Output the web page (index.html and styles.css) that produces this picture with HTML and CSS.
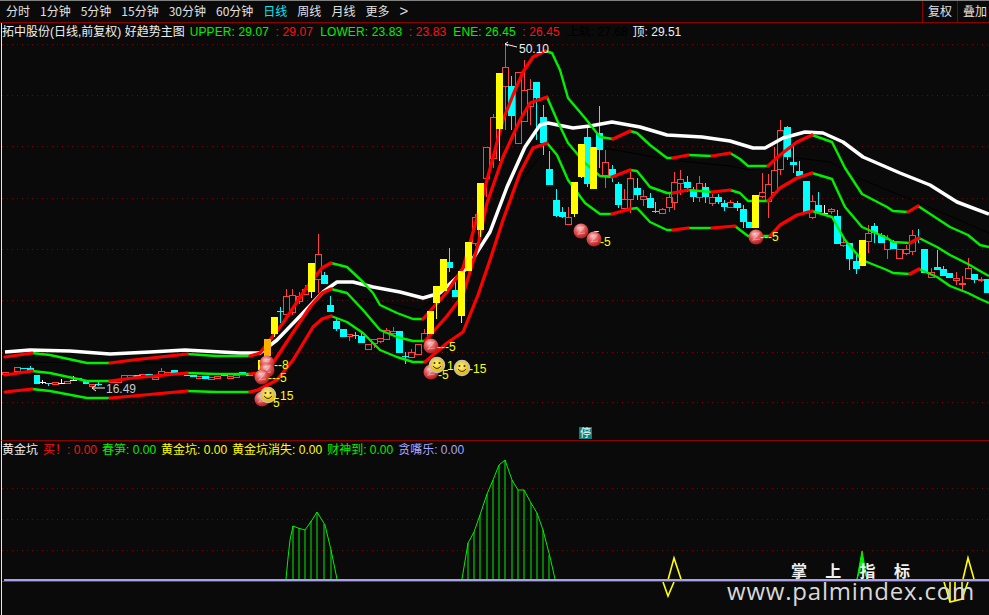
FILE: index.html
```html
<!DOCTYPE html>
<html lang="zh-CN">
<head>
<meta charset="utf-8">
<title>拓中股份</title>
<link rel="stylesheet" href="styles.css">
</head>
<body>
<header class="toolbar">
  <nav class="periods">
    <span>分时</span><span>1分钟</span><span>5分钟</span><span>15分钟</span><span>30分钟</span><span>60分钟</span><span class="on">日线</span><span>周线</span><span>月线</span><span>更多</span><span class="more">&gt;</span>
  </nav>
  <div class="tools"><span>复权</span><span>叠加</span></div>
</header>
<section class="panel main">
  <div class="legend">
    <span class="w title">拓中股份(日线,前复权) 好趋势主图</span>
    <span class="g">UPPER: 29.07 <i class="r">: 29.07</i></span>
    <span class="g">LOWER: 23.83 <i class="r">: 23.83</i></span>
    <span class="g">ENE: 26.45 <i class="r">: 26.45</i></span>
    <span class="k">上轨: 27.68</span>
    <span class="w">顶: 29.51</span>
  </div>
  <svg class="chart" width="987" height="417" viewBox="2 23 987 417">
    <defs>
      <radialGradient id="ballFill" cx="42%" cy="32%" r="72%"><stop offset="0" stop-color="#f6c8c8"/><stop offset=".5" stop-color="#e25050"/><stop offset="1" stop-color="#a81414"/></radialGradient>
      <radialGradient id="faceFill" cx="45%" cy="40%" r="60%"><stop offset="0" stop-color="#fff27a"/><stop offset="1" stop-color="#e0b000"/></radialGradient>
      <g id="ball"><circle r="7.5" class="ball"/><path class="sheen" d="M-4-3 3-4-3 3 4 2"/></g>
      <g id="smile"><circle r="7.5" class="face"/><circle cx="-2.5" cy="-2" r="1" class="eye"/><circle cx="2.5" cy="-2" r="1" class="eye"/><path d="M-4 1Q0 6 4 1" class="mouth"/></g>
    </defs>
    <path class="grid" d="M2 44H989M2 95H989M2 146H989M2 198H989M2 249H989M2 300H989M2 352H989M2 402H989"/>
    <polyline class="shade" points="5,362 110,363 250,363 280,345 305,318 330,297 370,300 420,310 460,280 500,210 537,160 550,150 610,149 670,160 730,166 750,170 797,158 830,162 863,180 917,202 989,233"/>

    <path class="wick-r" d="M475 214V246M486 147V197M493 114V168M505 43V130M518 72V143M524 60V121M530 79V125M568 207V224M605 150V188M624 189V212M630 172V213M643 190V206M662 208V214M669 193V212M674 172V210M680 170V195M699 176V202M712 194V206M730 200V208M762 173V198M768 174V218M774 147V195M780 120V175M812 195V219M831 208V214M843 237V247M868 225V253M887 235V259M906 245V255M912 230V255M931 268V277M956 272V285M962 276V290M968 258V278M981 277V282M286 289V314M292 289V315M299 292V304M305 285V294M318 234V293M349 334V341M374 339V348M380 338V343M386 328V339M393 327V333M411 349V357M424 329V341M161 368V374"/>
    <path class="body-r" d="M472 217h6v26h-6zM483 147h6v31h-6zM490 117h6v41h-6zM502 67h6v19h-6zM515 72h6v71h-6zM521 90h6v31h-6zM527 89h6v17h-6zM565 217h6v7h-6zM602 162h6v13h-6zM621 199h6v9h-6zM627 178h6v21h-6zM640 196h6v3h-6zM659 209h6v4h-6zM666 197h6v10h-6zM671 182h6v20h-6zM677 179h6v4h-6zM696 183h6v14h-6zM709 197h6v6h-6zM727 202h6v5h-6zM759 192h6v4h-6zM765 184h6v17h-6zM771 170h6v22h-6zM777 130h6v39h-6zM809 201h6v16h-6zM828 209h6v2h-6zM840 242h6v3h-6zM865 233h6v8h-6zM884 239h6v10h-6zM896 249h6v9h-6zM903 249h6v4h-6zM909 235h6v16h-6zM928 272h6v5h-6zM953 278h6v2h-6zM959 283h6v1h-6zM965 268h6v10h-6zM978 279h6v1h-6zM283 296h6v18h-6zM289 295h6v17h-6zM296 296h6v5h-6zM302 289h6v5h-6zM315 254h6v25h-6zM346 334h6v2h-6zM365 344h6v5h-6zM371 339h6v4h-6zM377 338h6v3h-6zM383 330h6v9h-6zM390 331h6v2h-6zM408 352h6v5h-6zM415 344h6v10h-6zM421 333h6v8h-6zM2 372h6v2h-6zM14 367h6v4h-6zM52 382h6v2h-6zM64 381h6v2h-6zM89 384h6v2h-6zM109 380h6v2h-6zM115 380h6v2h-6zM121 375h6v3h-6zM127 375h6v2h-6zM139 374h6v3h-6zM152 377h6v2h-6zM158 371h6v3h-6zM164 372h6v3h-6zM196 376h6v2h-6zM208 377h6v2h-6zM214 376h6v2h-6zM227 376h6v2h-6zM233 375h6v2h-6z"/>

    <path class="wick-c" d="M511 76V130M536 98V140M543 105V155M549 151V185M556 189V217M562 207V218M587 128V187M599 106V168M612 165V182M618 182V208M637 178V200M650 193V208M655 202V213M687 176V192M693 187V202M705 183V203M718 194V204M724 200V211M737 201V211M743 205V228M787 126V160M793 144V173M799 161V176M818 192V212M837 210V244M849 243V270M856 255V274M874 223V243M881 233V243M893 240V249M918 229V243M937 250V270M943 266V276M974 274V283M324 272V284M330 296V312M336 317V331M355 332V339M361 333V343M405 352V364M449 248V272M455 282V297M280 307V323M30 366V371M48 383V386M98 382V386"/>
    <path class="body-c" d="M508 86h7v30h-7zM533 82h7v16h-7zM540 117h7v26h-7zM546 169h7v16h-7zM553 200h7v16h-7zM559 212h7v5h-7zM584 137h7v47h-7zM596 133h7v17h-7zM609 169h7v8h-7zM615 184h7v21h-7zM634 188h7v7h-7zM647 198h7v10h-7zM652 211h7v1h-7zM684 182h7v6h-7zM690 191h7v6h-7zM702 187h7v10h-7zM715 197h7v5h-7zM721 203h7v4h-7zM734 203h7v5h-7zM740 209h7v13h-7zM746 222h7v6h-7zM784 127h7v30h-7zM790 162h7v3h-7zM796 171h7v5h-7zM803 181h7v31h-7zM815 205h7v7h-7zM834 216h7v28h-7zM846 243h7v16h-7zM853 261h7v8h-7zM871 226h7v7h-7zM878 235h7v8h-7zM890 242h7v7h-7zM915 238h7v2h-7zM921 249h7v24h-7zM934 267h7v3h-7zM940 269h7v7h-7zM946 273h7v5h-7zM971 274h7v6h-7zM984 279h5v14h-5zM321 275h7v9h-7zM327 305h7v7h-7zM333 321h7v8h-7zM340 329h7v8h-7zM352 335h7v1h-7zM358 336h7v7h-7zM396 331h7v22h-7zM402 356h7v1h-7zM446 262h7v6h-7zM452 290h7v7h-7zM277 311h7v1h-7zM20 368h7v1h-7zM27 368h7v3h-7zM34 375h6v9h-6zM45 383h7v1h-7zM76 378h6v1h-6zM83 380h6v4h-6zM95 384h7v1h-7zM134 375h7v2h-7zM146 374h7v3h-7zM171 370h7v3h-7zM184 375h7v1h-7zM190 375h7v2h-7zM202 376h7v3h-7zM221 375h7v1h-7zM239 372h7v1h-7zM246 374h7v2h-7z"/>
    <path class="wick-w" d="M42 380V384M39 382H46M61 379V383M58 383H65M73 376V380M70 380H77M824 205V213M821 213H828"/>

    <polyline class="ln-w" points="5,352 30,350 70,351 110,354 150,352 185,350 240,353 260,353 277,340 303,313 323,292 337,282 353,282 373,287 400,292 423,298 440,293 467,268 490,232 507,187 525,147 540,125 548,123 573,128 590,126 612,122 640,127 667,135 702,137 730,141 753,148 765,148 783,138 805,132 823,133 843,142 863,157 900,173 930,185 957,202 989,214"/>

    <g class="ln-g">
      <polyline points="32,353 50,355 87,363 110,363"/><polyline points="187,354 217,356 250,356"/><polyline points="331,263 347,267 363,282 373,293 380,305 397,313 413,319 423,319"/><polyline points="545,51 552,53 560,70 568,98 585,118 600,137 613,139"/><polyline points="630,131 637,133 650,145 667,158 673,158"/><polyline points="688,155 712,156"/><polyline points="730,153 740,159 748,166 768,166"/><polyline points="812,135 832,142 845,168 862,194 887,207 893,211 908,212"/><polyline points="918,206 950,227 968,235 980,245 989,247"/>
      <polyline points="32,371 50,373 87,381 110,381"/><polyline points="187,373 217,374 250,374"/><polyline points="331,289 347,293 363,310 380,330 397,337 413,341 425,341"/><polyline points="547,97 557,120 568,143 585,163 600,176 612,177"/><polyline points="630,170 637,171 650,187 667,193 673,193"/><polyline points="688,190 712,192"/><polyline points="730,190 740,193 748,201 768,201"/><polyline points="812,173 832,179 845,207 862,227 887,238 893,242 910,243"/><polyline points="919,238 937,247 950,255 968,264 980,271 989,276"/>
      <polyline points="32,389 50,391 87,398 110,398"/><polyline points="187,391 217,392 250,392"/><polyline points="331,316 347,322 363,333 380,350 397,357 413,362 425,362"/><polyline points="547,143 557,155 568,180 585,203 600,214 612,214"/><polyline points="630,209 637,208 650,222 667,230 673,230"/><polyline points="688,228 712,228"/><polyline points="735,226 740,230 748,236 770,236"/><polyline points="812,211 832,217 845,240 862,260 887,270 893,273 910,274"/><polyline points="919,269 937,277 950,286 968,293 980,299 989,303"/>
    </g>
    <g class="ln-r">
      <polyline points="5,357 32,353"/><polyline points="110,363 133,360 187,354"/><polyline points="250,356 260,353 283,323 307,287 322,268 331,263"/><polyline points="423,319 447,292 463,268 475,225 487,180 503,120 513,95 523,72 533,57 545,51"/><polyline points="613,139 630,131"/><polyline points="673,158 688,155"/><polyline points="712,156 730,153"/><polyline points="768,166 780,155 797,142 812,135"/><polyline points="908,212 918,206"/>
      <polyline points="5,375 32,371"/><polyline points="110,381 133,378 187,373"/><polyline points="250,374 260,373 273,363 290,337 310,307 322,293 331,289"/><polyline points="425,341 447,316 463,295 478,245 487,203 503,157 520,120 530,103 547,97"/><polyline points="612,177 630,170"/><polyline points="673,193 688,190"/><polyline points="712,192 730,190"/><polyline points="768,201 780,188 797,178 812,173"/><polyline points="910,243 919,238"/>
      <polyline points="5,392 32,389"/><polyline points="110,398 133,396 187,391"/><polyline points="250,392 258,390 277,380 293,360 313,327 322,319 331,316"/><polyline points="425,362 447,343 463,332 478,295 490,260 503,220 520,173 533,148 547,143"/><polyline points="612,214 630,209"/><polyline points="673,230 688,228"/><polyline points="712,228 735,226"/><polyline points="770,236 780,225 797,215 812,211"/><polyline points="910,274 919,269"/>
    </g>

    <path class="body-y" d="M477 183h7v47h-7zM496 73h7v56h-7zM571 182h7v32h-7zM578 144h7v33h-7zM590 147h7v42h-7zM752 195h7v33h-7zM859 240h7v26h-7zM271 317h7v17h-7zM308 263h7v29h-7zM427 311h7v23h-7zM433 286h7v17h-7zM440 259h7v32h-7zM458 271h7v45h-7zM465 242h7v29h-7zM258 360h7v10h-7z"/>
    <path class="wick-y" d="M480 230V237M499 129V161M574 214V217M581 177V178M274 334V337M311 292V298M436 303V319M461 316V323"/>
    <rect class="body-o" x="264" y="339" width="7" height="17"/>

    <g class="mark"><text x="593" y="240">5</text></g>
    <use href="#ball" x="267" y="363"/><use href="#ball" x="267" y="370"/><use href="#ball" x="262" y="377"/><use href="#ball" x="262" y="399"/><use href="#smile" x="268" y="395"/><use href="#ball" x="431" y="346"/><use href="#ball" x="431" y="372"/><use href="#smile" x="437" y="365"/><use href="#smile" x="462" y="368"/><use href="#ball" x="581" y="231"/><use href="#ball" x="594" y="239"/><use href="#ball" x="756" y="237"/>

    <g class="mark">
      <text x="274" y="369">--8</text><text x="268" y="382">---5</text><text x="273" y="407">5</text><text x="280" y="400">15</text><text x="437" y="351">---5</text><text x="447" y="370">1</text><text x="438" y="379">-5</text><text x="469" y="373">-15</text><text x="600" y="246">-5</text><text x="760" y="241">---5</text>
    </g>
    <path class="note" d="M505 44 517 47M505 44 508 42M505 44 508 46M92 388H105M92 388 96 385M92 388 96 391"/>
    <text class="peak" x="519" y="53">50.10</text>
    <text class="peak dim" x="106" y="393">16.49</text>
    <rect class="stop" x="579" y="427" width="13" height="12"/>
    <text class="stop-t" x="585.5" y="437">停</text>
  </svg>
</section>
<section class="panel sub">
  <div class="legend">
    <span class="w">黄金坑</span>
    <span class="r">买！: 0.00</span>
    <span class="g">春笋: 0.00</span>
    <span class="y">黄金坑: 0.00</span>
    <span class="y">黄金坑消失: 0.00</span>
    <span class="g">财神到: 0.00</span>
    <span class="p">贪嘴乐: 0.00</span>
  </div>
  <svg class="chart" width="987" height="174" viewBox="2 441 987 174">
    <path class="grid" d="M2 488H989M2 519H989M2 550H989"/>
    <path class="hill" d="M286 579 288 558 290 540 293 526 298 528 305 530 312 520 317 512 325 525 331 550 337 579M293 579V526M299 579V528M305 579V530M311 579V521M317 579V512M324 579V524M331 579V550"/>
    <path class="hill" d="M462 579 468 543 474 532 480 515 487 494 493 480 499 465 505 460 512 480 518 490 524 490 531 503 537 513 543 530 550 557 555 579M468 579V543M474 579V532M480 579V515M487 579V494M493 579V480M499 579V465M505 579V460M512 579V480M518 579V490M524 579V490M531 579V503M537 579V513M543 579V530M549 579V555"/>
    <path class="peak-g" d="M857 579 862 551 867 579 862 565Z"/>
    <path class="zig" d="M668 580 674 558 681 579M663 582 668 596 674 582M963 579 968 558 974 579M944 582 950 602 962 599 968 582M950 582V602M955 582V601M962 582V599"/>
    <path class="base-r" d="M2 581.5H989"/>
    <path class="base" d="M4 580H989"/>
  </svg>
  <div class="brand"><b>掌上指标</b><span>www.palmindex.com</span></div>
</section>
</body>
</html>
```

FILE: styles.css
```css
* { box-sizing: border-box; }
html, body { margin: 0; padding: 0; }
body {
  width: 989px; height: 615px; overflow: hidden;
  background: #0a0a0a; color: #e0e0e0;
  font: 12px/14px "Liberation Sans", "Noto Sans CJK SC", sans-serif;
}
.toolbar {
  height: 23px; display: flex; justify-content: space-between;
  border-top: 1px solid #808080; border-bottom: 1px solid #8c0000;
  font-family: "Noto Sans CJK SC", sans-serif;
}
.periods { display: flex; gap: 10px; padding: 3px 0 0 6px; }
.periods .on { color: #00e8f0; }
.periods .more { font: 15px/13px "Liberation Sans", sans-serif; }
.tools { display: flex; }
.tools span { width: 35px; padding: 3px 0 0 5px; border-left: 1px solid #8c0000; white-space: nowrap; overflow: hidden; }
.tools span:last-child { width: 32px; }

.panel { position: relative; margin-left: 1px; border-left: 1px solid #e8e8e8; }
.main { height: 417px; }
.sub { height: 175px; border-top: 1px solid #8c0000; }
.chart { display: block; }

.legend { position: absolute; left: 0; display: flex; white-space: nowrap; }
.main .legend { top: 2px; gap: 7px; }
.main .legend .g { letter-spacing: .12px; }
.main .legend .k { margin-right: -2px; }
.sub .legend { top: 2px; gap: 5px; }
.legend i { font-style: normal; margin-left: 3px; }
.title { margin-right: -2px; }
.w { color: #f0f0f0; }
.g { color: #00f000; }
.r { color: #ff1010; }
.y { color: #ffff00; }
.p { color: #a8a8ff; }
.k { color: #000; }

.grid { fill: none; stroke: #7a0000; stroke-width: 1; stroke-dasharray: 1 4; shape-rendering: crispEdges; }
.shade { fill: none; stroke: #000; stroke-width: 1; }
.wick-r { fill: none; stroke: #ff4040; stroke-width: 1; shape-rendering: crispEdges; }
.body-r { fill: #0a0a0a; stroke: #ff4040; stroke-width: 1; shape-rendering: crispEdges; }
.wick-c { fill: none; stroke: #00ffff; stroke-width: 1; shape-rendering: crispEdges; }
.body-c { fill: #00ffff; shape-rendering: crispEdges; }
.wick-w { fill: none; stroke: #ffffff; stroke-width: 1; shape-rendering: crispEdges; }
.wick-y { fill: none; stroke: #ffff00; stroke-width: 1; shape-rendering: crispEdges; }
.body-y { fill: #ffff00; shape-rendering: crispEdges; }
.body-o { fill: #ffb000; shape-rendering: crispEdges; }
.ln-w { fill: none; stroke: #ffffff; stroke-width: 3.5; stroke-linejoin: round; }
.ln-g polyline { fill: none; stroke: #00f000; stroke-width: 2.4; stroke-linejoin: round; }
.ln-r polyline { fill: none; stroke: #ff0000; stroke-width: 3.2; stroke-linejoin: round; stroke-linecap: round; }

.ball { fill: url(#ballFill); }
.sheen { fill: none; stroke: #fbe0e0; stroke-width: 1.1; opacity: .45; }
.face { fill: url(#faceFill); stroke: #c4c4b4; stroke-width: 1.5; }
.eye { fill: #403000; }
.mouth { fill: none; stroke: #403000; stroke-width: 1; }

.mark text { fill: #ffff00; font: 12px "Liberation Sans", sans-serif; }
.note { fill: none; stroke: #f0f0f0; stroke-width: 1; }
.peak { fill: #f0f0f0; font: 12px "Liberation Sans", sans-serif; }
.dim { fill: #c8c8c8; }
.stop { fill: #0a8080; }
.stop-t { fill: #f0ffff; font: 11px "Noto Sans CJK SC", sans-serif; text-anchor: middle; }

.hill { fill: none; stroke: #00f000; stroke-width: 1; }
.peak-g { fill: #00f000; stroke: #00f000; stroke-width: 1; }
.zig { fill: none; stroke: #ffff00; stroke-width: 1.6; }
.base { fill: none; stroke: #a8a0e8; stroke-width: 2; shape-rendering: crispEdges; }
.base-r { fill: none; stroke: #e00020; stroke-width: 1; shape-rendering: crispEdges; }

.brand { position: absolute; left: 725px; top: 121px; width: 250px; display: flex; flex-direction: column; color: #f0f0f0; }
.brand b { font: bold 16px/17px "Noto Sans CJK SC", sans-serif; letter-spacing: 18.3px; margin-left: 64px; white-space: nowrap; }
.brand span { font: 24px/24px "Open Sans", sans-serif; letter-spacing: .8px; color: #d8d8d8; white-space: nowrap; }
```
